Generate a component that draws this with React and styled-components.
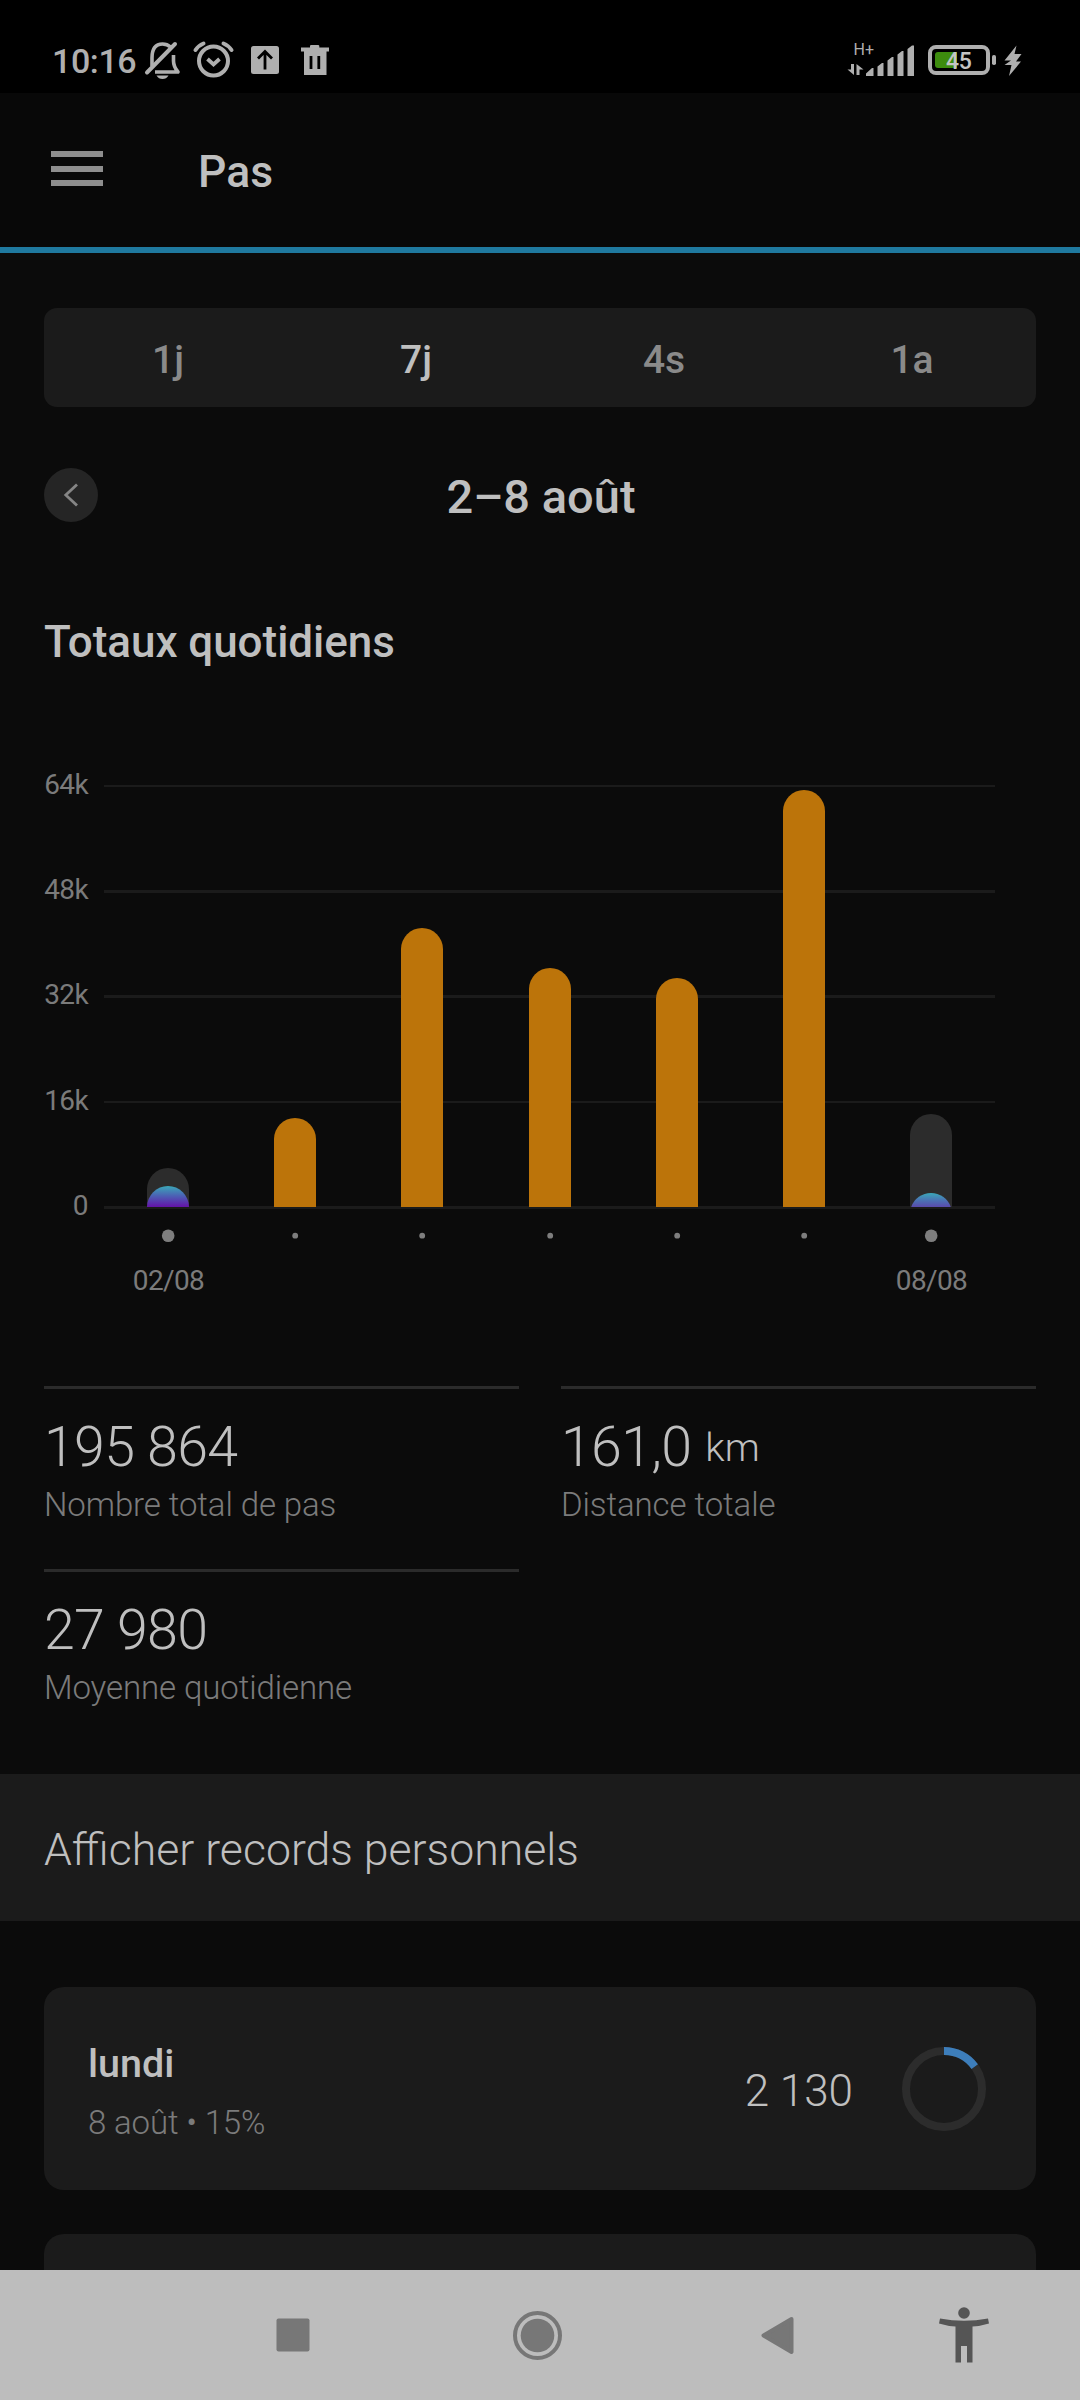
import React from "react";
import styled, { createGlobalStyle } from "styled-components";

const GlobalStyle = createGlobalStyle`
  * { box-sizing: border-box; }
  body { margin: 0; background: #0b0b0b; font-family: Roboto, "Liberation Sans", sans-serif; }
`;

const Screen = styled.div`
  width: 1080px;
  height: 2400px;
  display: flex;
  flex-direction: column;
  overflow: hidden;
  background: #0b0b0b;
  color: #bfbfbf;
`;

const StatusBar = styled.div`
  flex: none;
  height: 93px;
  background: #000;
  color: #afafaf;
  display: flex;
  justify-content: space-between;
`;

const Clock = styled.span`
  font-size: 34px;
  font-weight: 500;
  letter-spacing: -0.4px;
  line-height: 40px;
  margin: 41px 0 0 52px;
  width: 92px;
  white-space: nowrap;
`;

const StatusGroup = styled.div`
  display: flex;
`;

const StatusIcon = styled.svg`
  display: block;
  flex: none;
`;

const Header = styled.header`
  flex: none;
  height: 160px;
  padding-left: 51px;
  display: flex;
  background: #080808;
  border-bottom: 6px solid #1f799f;
`;

const MenuButton = styled.button`
  all: unset;
  display: flex;
  flex-direction: column;
  gap: 8.5px;
  width: 52px;
  margin: 58px 95px 0 0;
`;

const MenuLine = styled.span`
  height: 6px;
  background: #8e8e8e;
`;

const PageTitle = styled.h1`
  margin: 52px 0 0;
  font-size: 44.5px;
  font-weight: 500;
  line-height: 54px;
`;

const Content = styled.main`
  flex: 1;
  min-height: 0;
  overflow: hidden;
  display: flex;
  flex-direction: column;
`;

const Tabs = styled.div`
  flex: none;
  display: grid;
  grid-template-columns: repeat(4, 1fr);
  height: 99px;
  margin: 55px 44px 0;
  border-radius: 13px;
  background: #1b1b1b;
`;

const Tab = styled.div`
  display: flex;
  justify-content: center;
  font-size: 39px;
  line-height: 46px;
  padding-top: 29px;
  font-weight: 500;
  color: ${(p) => (p.$active ? "#bfbfbf" : "#8a8a8a")};
`;

const DateRow = styled.div`
  flex: none;
  display: grid;
  grid-template-columns: 54px 1fr 54px;
  align-items: center;
  height: 54px;
  margin: 61px 44px 0;
`;

const BackButton = styled.button`
  all: unset;
  width: 54px;
  height: 54px;
  border-radius: 50%;
  background: #252525;
`;

const DateTitle = styled.h2`
  margin: 2px 0 0 2px;
  text-align: center;
  font-size: 47px;
  font-weight: 500;
  line-height: 51px;
`;

const SectionTitle = styled.h3`
  flex: none;
  margin: 94px 44px 0;
  font-size: 44px;
  font-weight: 500;
  letter-spacing: -0.05px;
  line-height: 52px;
`;

const Chart = styled.div`
  flex: none;
  display: grid;
  grid-template-columns: 44px 891px;
  column-gap: 16px;
  height: 519px;
  margin: 101px 44px 0;
`;

const Axis = styled.div`
  display: flex;
  flex-direction: column;
  align-items: flex-end;
  font-size: 28px;
  letter-spacing: -0.6px;
  color: #7b7b7b;
`;

const AxisLabel = styled.span`
  flex: none;
  height: 105.2px;
  line-height: 31px;
`;

const ChartSvg = styled.svg`
  display: block;
  overflow: visible;
`;

const ChartLabel = styled.text`
  font-size: 28px;
  letter-spacing: -0.6px;
  fill: #7b7b7b;
  text-anchor: middle;
`;

const Stats = styled.div`
  flex: none;
  display: grid;
  grid-template-columns: 475px 475px;
  grid-auto-rows: 183px;
  column-gap: 42px;
  margin: 98px 44px 0;
  height: 388px;
`;

const Stat = styled.div`
  border-top: 3px solid #2b2b2b;
`;

const StatValue = styled.div`
  display: flex;
  gap: 14px;
  font-size: 55.5px;
  font-weight: 300;
  letter-spacing: -0.7px;
  line-height: 66px;
  height: 66px;
  margin-top: 26px;
`;

const Unit = styled.span`
  font-size: 39.5px;
  letter-spacing: 0;
  line-height: 65px;
`;

const StatLabel = styled.div`
  font-size: 33px;
  font-weight: 300;
  letter-spacing: -0.1px;
  line-height: 40px;
  margin-top: 4px;
  color: #7b7b7b;
`;

const RecordsRow = styled.div`
  flex: none;
  height: 147px;
  padding: 50px 44px 0;
  background: #1b1b1b;
  font-size: 44.6px;
  font-weight: 300;
  line-height: 52px;
`;

const DayList = styled.div`
  display: flex;
  flex-direction: column;
  gap: 44px;
  padding: 66px 44px 0;
`;

const DayCard = styled.div`
  flex: none;
  height: 203px;
  display: flex;
  border-radius: 20px;
  background: #1b1b1b;
  padding: 0 50px 0 44px;
`;

const DayInfo = styled.div`
  flex: 1;
  padding-top: 54px;
`;

const DayName = styled.div`
  font-size: 39.5px;
  font-weight: 500;
  line-height: 46px;
`;

const DayMeta = styled.div`
  margin-top: 16px;
  font-size: 33px;
  font-weight: 300;
  letter-spacing: -0.15px;
  line-height: 40px;
  color: #7b7b7b;
`;

const DaySteps = styled.div`
  padding-top: 78px;
  margin-right: 49px;
  font-size: 44px;
  font-weight: 300;
  line-height: 52px;
`;

const Ring = styled.svg`
  display: block;
  margin-top: 60px;
`;

const NavBar = styled.nav`
  flex: none;
  height: 130px;
  background: #bdbdbd;
`;

const AXIS = ["64k", "48k", "32k", "16k", "0"];

const GRID = [
  [-1, 2],
  [104, 3],
  [209, 3],
  [315, 2],
  [420, 3],
];

const DAYS = [
  { x: 43, h: 39, done: 21, label: "02/08", id: "a", end: "#6412a8" },
  { x: 170, h: 89 },
  { x: 297, h: 279 },
  { x: 425, h: 239 },
  { x: 552, h: 229 },
  { x: 679, h: 417 },
  { x: 806, h: 93, done: 14, label: "08/08", id: "b", end: "#5a4aac" },
];

const BASE = 421;

function barPath(x, h) {
  const w = 42;
  const r = 21;
  if (h >= r) {
    return `M${x} ${BASE}V${BASE - h + r}a${r} ${r} 0 0 1 ${w} 0V${BASE}Z`;
  }
  const d = r - h;
  const half = Math.sqrt(r * r - d * d);
  const cx = x + r;
  return `M${cx - half} ${BASE}A${r} ${r} 0 0 1 ${cx + half} ${BASE}Z`;
}

function StepsChart() {
  return (
    <Chart>
      <Axis>
        {AXIS.map((l) => (
          <AxisLabel key={l}>{l}</AxisLabel>
        ))}
      </Axis>
      <ChartSvg width="891" height="519" viewBox="0 -17 891 519">
        <defs>
          {DAYS.filter((d) => d.done).map((d) => (
            <linearGradient key={d.id} id={d.id} x1="0" y1="0" x2="0" y2="1">
              <stop offset="0" stopColor="#3aa8b8" />
              <stop offset="0.5" stopColor={d.id === "a" ? "#4d5cb4" : "#4a74b4"} />
              <stop offset="1" stopColor={d.end} />
            </linearGradient>
          ))}
        </defs>
        {GRID.map(([y, h]) => (
          <rect key={y} x="0" y={y} width="891" height={h} fill="#1b1b1b" />
        ))}
        {DAYS.map((d) => (
          <g key={d.x}>
            <path d={barPath(d.x, d.h)} fill={d.done ? "#2c2c2c" : "#bc740a"} />
            {d.done && <path d={barPath(d.x, d.done)} fill={`url(#${d.id})`} />}
            <circle cx={d.x + 21.2} cy="449.7" r={d.label ? 6.3 : 2.9} fill="#7e7e7e" />
            {d.label && (
              <ChartLabel x={d.x + 21.5} y="504">
                {d.label}
              </ChartLabel>
            )}
          </g>
        ))}
      </ChartSvg>
    </Chart>
  );
}

function LeftStatusIcons() {
  return (
    <StatusIcon width="190" height="93" viewBox="144 0 190 93" fill="none" stroke="#afafaf">
      <path d="M152 66V58C152 48 156 44 162.500 44C166 44 168.500 45.200 170.500 47M173.500 55V61C173.500 66 175.500 69 178 72H155" strokeWidth="3.600" strokeLinejoin="round" />
      <path d="M147 72.500L175 44" strokeWidth="4" strokeLinecap="round" />
      <path d="M156.500 75.500H168.500Q166.500 79 162.500 79Q158.500 79 156.500 75.500Z" fill="#afafaf" stroke="none" />
      <circle cx="213.500" cy="61" r="14.500" strokeWidth="4" />
      <path d="M207.500 59L213.500 64.500L219.500 59" strokeWidth="3.800" />
      <path d="M195.500 50Q198.500 45.500 203.500 43.500M231.500 50Q228.500 45.500 223.500 43.500" strokeWidth="4" strokeLinecap="round" />
      <rect x="251" y="46" width="28" height="28" rx="2.500" fill="#afafaf" stroke="none" />
      <path d="M265 69.500V53M258 58.500L265 51.500L272 58.500" stroke="#000" strokeWidth="2.800" />
      <path d="M301 47.500H310V46Q310 45 311.200 45H318Q319.300 45 319.300 46V47.500H329V51.500H326.500V75H304V51.500H301Z" fill="#afafaf" stroke="none" />
      <path d="M311 56V69M318.800 56V69" stroke="#000" strokeWidth="2.800" />
    </StatusIcon>
  );
}

const NetworkText = styled.text`
  font-size: 16px;
  fill: #afafaf;
`;

const BatteryText = styled.text`
  font-size: 23px;
  font-weight: 500;
  letter-spacing: -0.3px;
  fill: #c4c4c4;
`;

function RightStatusIcons() {
  return (
    <StatusIcon width="240" height="93" viewBox="840 0 240 93" fill="#afafaf">
      <NetworkText x="853.5" y="54.500">H+</NetworkText>
      <path d="M851 64H854V75L847.500 69.500H851ZM856.500 75V64L863.500 69.500H859.500V75Z" />
      <path d="M866 76V73.500L872 68H873.500V76ZM877.500 76V66.500L882 63H883.500V76ZM887.500 76V60.500L892 57H893.500V76ZM897.500 76V54.500L902 51H903.500V76ZM907.500 76V49L912 45.500H914V76Z" />
      <rect x="930" y="47" width="58" height="26" rx="6" fill="none" stroke="#afafaf" strokeWidth="4" />
      <path d="M938 52H957V68H938Q935 68 935 65V55Q935 52 938 52Z" fill="#3d8c0e" />
      <rect x="992" y="55" width="4" height="10" rx="1.800" />
      <BatteryText x="946" y="69">45</BatteryText>
      <path d="M1016.500 45.500L1004.500 60.500H1011L1004.500 65H1011.500L1009 76L1021 61.500H1016L1021.500 54H1014.500Z" />
    </StatusIcon>
  );
}

export default function App() {
  return (
    <Screen>
      <GlobalStyle />
      <StatusBar>
        <StatusGroup>
          <Clock>10:16</Clock>
          <LeftStatusIcons />
        </StatusGroup>
        <RightStatusIcons />
      </StatusBar>
      <Header>
        <MenuButton aria-label="Menu">
          <MenuLine />
          <MenuLine />
          <MenuLine />
        </MenuButton>
        <PageTitle>Pas</PageTitle>
      </Header>
      <Content>
        <Tabs>
          <Tab>1j</Tab>
          <Tab $active>7j</Tab>
          <Tab>4s</Tab>
          <Tab>1a</Tab>
        </Tabs>
        <DateRow>
          <BackButton aria-label="Précédent">
            <svg width="54" height="54" viewBox="0 0 54 54" fill="none" stroke="#858585" strokeWidth="2.800">
              <path d="M33 16.500L21.800 27L33 37.500" />
            </svg>
          </BackButton>
          <DateTitle>2–8 août</DateTitle>
        </DateRow>
        <SectionTitle>Totaux quotidiens</SectionTitle>
        <StepsChart />
        <Stats>
          <Stat>
            <StatValue>195 864</StatValue>
            <StatLabel>Nombre total de pas</StatLabel>
          </Stat>
          <Stat>
            <StatValue>
              161,0<Unit>km</Unit>
            </StatValue>
            <StatLabel>Distance totale</StatLabel>
          </Stat>
          <Stat>
            <StatValue>27 980</StatValue>
            <StatLabel>Moyenne quotidienne</StatLabel>
          </Stat>
        </Stats>
        <RecordsRow>Afficher records personnels</RecordsRow>
        <DayList>
          <DayCard>
            <DayInfo>
              <DayName>lundi</DayName>
              <DayMeta>8 août • 15%</DayMeta>
            </DayInfo>
            <DaySteps>2 130</DaySteps>
            <Ring width="84" height="84" viewBox="0 0 84 84" fill="none" strokeWidth="8">
              <circle cx="42" cy="42" r="38" stroke="#2c2c2c" />
              <circle cx="42" cy="42" r="38" stroke="#3d7ebb" pathLength="100" strokeDasharray="15 85" transform="rotate(-90 42 42)" />
            </Ring>
          </DayCard>
          <DayCard />
        </DayList>
      </Content>
      <NavBar>
        <svg width="1080" height="130" viewBox="0 2270 1080 130">
          <rect x="276.500" y="2318.500" width="33" height="33" rx="2" fill="#777" />
          <circle cx="537.500" cy="2335.500" r="22.500" fill="none" stroke="#777" strokeWidth="4" />
          <circle cx="537.500" cy="2335.500" r="16.800" fill="#777" />
          <path d="M791.500 2319L763.500 2335.500L791.500 2352Z" fill="#777" stroke="#777" strokeWidth="4" strokeLinejoin="round" />
          <circle cx="964" cy="2313" r="5.800" fill="#555" />
          <path d="M940 2318.500Q964 2323 988 2318.500L989 2323.500Q981 2326 972.500 2326.500V2362.500H967V2346H961V2362.500H955.500V2326.500Q947 2326 939 2323.500Z" fill="#555" />
        </svg>
      </NavBar>
    </Screen>
  );
}
